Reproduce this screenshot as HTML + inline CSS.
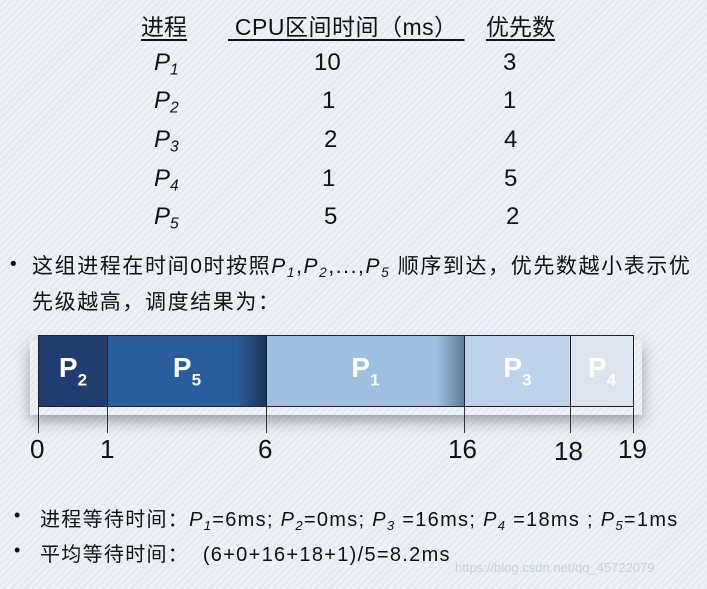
<!DOCTYPE html>
<html><head><meta charset="utf-8"><style>
body{margin:0;width:707px;height:589px;overflow:hidden;position:relative;
font-family:"Liberation Sans","Noto Sans CJK SC",sans-serif;color:#111;
background:repeating-linear-gradient(135deg,#eef2f8 0 3px,#e4eaf3 3px 5px);}
.t{position:absolute;white-space:nowrap;}
.h{font-size:23px;text-decoration:underline;text-underline-offset:4px}
.r{font-size:24px}
i{font-style:italic}
sub{font-size:0.65em;vertical-align:-0.3em}
.seg{position:absolute;top:335px;height:72px;border:1px solid #222;box-sizing:border-box;color:#fff;font-weight:bold;font-size:28px;display:flex;align-items:center;justify-content:center}
.seg sub{font-size:17px;vertical-align:-0.5em}
.tick{position:absolute;top:407px;width:1px;height:26px;background:#333}
.n{position:absolute;top:434px;font-size:26px;font-family:"Liberation Sans Narrow","Liberation Sans",sans-serif}
</style></head><body>
<div class="t h" style="left:141px;top:8px">进程</div>
<div class="t h" style="left:228px;top:8px;letter-spacing:0.5px">&nbsp;CPU区间时间（ms）&nbsp;</div>
<div class="t h" style="left:486px;top:8px">优先数</div>
<div class="t r" style="left:154px;top:49px"><i>P<sub>1</sub></i></div><div class="t r" style="left:314px;top:49px">10</div><div class="t r" style="left:503px;top:49px">3</div>
<div class="t r" style="left:154px;top:87px"><i>P<sub>2</sub></i></div><div class="t r" style="left:322px;top:87px">1</div><div class="t r" style="left:503px;top:87px">1</div>
<div class="t r" style="left:154px;top:126px"><i>P<sub>3</sub></i></div><div class="t r" style="left:324px;top:126px">2</div><div class="t r" style="left:504px;top:126px">4</div>
<div class="t r" style="left:154px;top:165px"><i>P<sub>4</sub></i></div><div class="t r" style="left:322px;top:165px">1</div><div class="t r" style="left:504px;top:165px">5</div>
<div class="t r" style="left:154px;top:203px"><i>P<sub>5</sub></i></div><div class="t r" style="left:324px;top:203px">5</div><div class="t r" style="left:506px;top:203px">2</div>

<div class="t" style="left:10px;top:254px;font-size:19px">•</div>
<div class="t" style="left:32px;top:252px;font-size:21px;line-height:30px;letter-spacing:1.6px">这组进程在时间0时按照<i>P<sub>1</sub></i>,<i>P<sub>2</sub></i>,...,<i>P<sub>5</sub></i> 顺序到达，优先数越小表示优<br>先级越高，调度结果为：</div>

<div style="position:absolute;left:30px;top:340px;width:612px;height:75px;box-shadow:0 6px 14px rgba(0,0,0,.35)"></div>
<div class="seg" style="left:38px;width:70px;background:#213d70"><span>P<sub>2</sub></span></div>
<div class="seg" style="left:107px;width:160px;background:linear-gradient(90deg,#2a5d9d 82%,#1c3355)"><span>P<sub>5</sub></span></div>
<div class="seg" style="left:266px;width:199px;background:linear-gradient(90deg,#a0c0e2 86%,#5f7a96)"><span>P<sub>1</sub></span></div>
<div class="seg" style="left:464px;width:107px;background:#bdd3ea"><span>P<sub>3</sub></span></div>
<div class="seg" style="left:570px;width:64px;background:#dce5ef"><span>P<sub>4</sub></span></div>
<div class="tick" style="left:38px"></div><div class="tick" style="left:107px"></div><div class="tick" style="left:266px"></div><div class="tick" style="left:464px"></div><div class="tick" style="left:570px"></div><div class="tick" style="left:633px"></div>
<div class="n" style="left:30px">0</div><div class="n" style="left:100px">1</div><div class="n" style="left:258px">6</div><div class="n" style="left:448px">16</div><div class="n" style="left:554px;top:436px">18</div><div class="n" style="left:618px">19</div>

<div class="t" style="left:14px;top:505px;font-size:18px">•</div>
<div class="t" style="left:40px;top:503px;font-size:20px;letter-spacing:1.3px">进程等待时间：<i>P<sub>1</sub></i>=6ms; <i>P<sub>2</sub></i>=0ms; <i>P<sub>3</sub></i> =16ms; <i>P<sub>4</sub></i> =18ms ; <i>P<sub>5</sub></i>=1ms</div>
<div class="t" style="left:14px;top:540px;font-size:18px">•</div>
<div class="t" style="left:40px;top:538px;font-size:20px;letter-spacing:1.3px">平均等待时间：&nbsp; (6+0+16+18+1)/5=8.2ms</div>
<div class="t" style="left:455px;top:560px;font-size:13px;color:#c8d0da">https://blog.csdn.net/qq_45722079</div>
</body></html>
